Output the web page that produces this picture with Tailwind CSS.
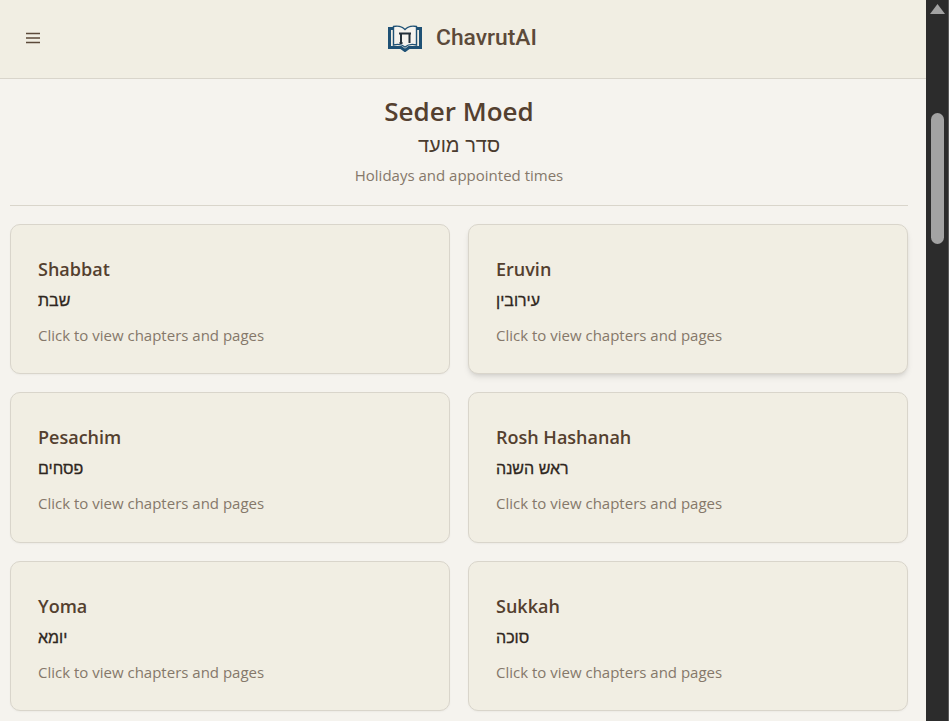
<!DOCTYPE html>
<html lang="en">
<head>
    <meta charset="UTF-8">
    <title>ChavrutAI</title>
    <script src="https://cdn.jsdelivr.net/npm/@tailwindcss/browser@4"></script>
</head>
<body>
<div class="h-screen w-full flex overflow-hidden bg-[#f5f3ee] font-['Open_Sans','Noto_Sans',sans-serif]">
    <div class="flex-1 min-w-0 overflow-hidden">
        <!-- Header -->
        <header class="h-[79px] bg-[#f1eee3] border-b border-[#d9d5cb] relative flex items-center justify-center">
            <button class="absolute left-[26px] top-[32px] text-[#5c4a3a]">
                <svg class="block w-[14px] h-[12px]" viewBox="0 0 14 12" fill="none" stroke="currentColor" stroke-width="1.5">
                    <path d="M0 1.5h14M0 6h14M0 10.5h14" />
                </svg>
            </button>
            <div class="flex items-center gap-[14px] mb-[3px] w-[149px] ml-[-1px]">
                <svg class="w-[34px] h-[28px] shrink-0" viewBox="0 0 34 28" fill="none">
                    <path d="M6 4.5H1.5V23.5H13L17 26.5L21 23.5H32.5V4.5H28" stroke="#1f5175" stroke-width="3" />
                    <path d="M5.5 21V2.5C9 1.5 14 2.5 17 5.5C20 2.5 25 1.5 28.5 2.5V21C25 20 20 20.5 17 23C14 20.5 9 20 5.5 21Z" fill="#f5f3ee" stroke="#1f5175" stroke-width="1.4" />
                    <path d="M11 9.5H23M13 9.5V19M21.5 9.5V19M11.5 19H14.5" stroke="#24303a" stroke-width="2" />
                </svg>
                <span class="font-['Roboto',sans-serif] font-medium text-[22.8px] leading-8 text-[#5c4a3a]">ChavrutAI</span>
            </div>
        </header>

        <!-- Main Content -->
        <main class="px-[10px]">
            <div class="w-[898px]">
                <div class="text-center border-b border-[#d9d5cb] h-[127px] pt-[14px]">
                    <h1 class="text-[26px] leading-[36px] font-[550] text-[#54402f]">Seder Moed</h1>
                    <p class="text-[20px] leading-[28px] mt-[2px] text-[#4a3b2e] font-['Liberation_Sans',sans-serif]" dir="rtl">סדר מועד</p>
                    <p class="text-[15px] leading-[22px] mt-[5px] text-[#85786a]">Holidays and appointed times</p>
                </div>

                <div class="grid grid-cols-2 gap-[18px] mt-[18px]">
                    <div class="h-[150.4px] rounded-[10px] border border-[#d9d5cb] bg-[#f1eee3] shadow-[0_1px_2px_rgba(0,0,0,0.04)] px-[27px] pt-[30px]">
                        <h3 class="text-[18px] leading-[28px] font-[550] text-[#54402f]">Shabbat</h3>
                        <p class="text-[16px] leading-[24px] mt-[6px] text-[#2e2620] text-left font-['Liberation_Sans',sans-serif] [-webkit-text-stroke:0.3px]">שבת</p>
                        <p class="text-[15px] leading-[22px] mt-[11px] text-[#85786a]">Click to view chapters and pages</p>
                    </div>
                    <div class="h-[150.4px] rounded-[10px] border border-[#d9d5cb] bg-[#f1eee3] shadow-md px-[27px] pt-[30px]">
                        <h3 class="text-[18px] leading-[28px] font-[550] text-[#54402f]">Eruvin</h3>
                        <p class="text-[16px] leading-[24px] mt-[6px] text-[#2e2620] text-left font-['Liberation_Sans',sans-serif] [-webkit-text-stroke:0.3px]">עירובין</p>
                        <p class="text-[15px] leading-[22px] mt-[11px] text-[#85786a]">Click to view chapters and pages</p>
                    </div>
                    <div class="h-[150.4px] rounded-[10px] border border-[#d9d5cb] bg-[#f1eee3] shadow-[0_1px_2px_rgba(0,0,0,0.04)] px-[27px] pt-[30px]">
                        <h3 class="text-[18px] leading-[28px] font-[550] text-[#54402f]">Pesachim</h3>
                        <p class="text-[16px] leading-[24px] mt-[6px] text-[#2e2620] text-left font-['Liberation_Sans',sans-serif] [-webkit-text-stroke:0.3px]">פסחים</p>
                        <p class="text-[15px] leading-[22px] mt-[11px] text-[#85786a]">Click to view chapters and pages</p>
                    </div>
                    <div class="h-[150.4px] rounded-[10px] border border-[#d9d5cb] bg-[#f1eee3] shadow-[0_1px_2px_rgba(0,0,0,0.04)] px-[27px] pt-[30px]">
                        <h3 class="text-[18px] leading-[28px] font-[550] text-[#54402f]">Rosh Hashanah</h3>
                        <p class="text-[16px] leading-[24px] mt-[6px] text-[#2e2620] text-left font-['Liberation_Sans',sans-serif] [-webkit-text-stroke:0.3px]">ראש השנה</p>
                        <p class="text-[15px] leading-[22px] mt-[11px] text-[#85786a]">Click to view chapters and pages</p>
                    </div>
                    <div class="h-[150.4px] rounded-[10px] border border-[#d9d5cb] bg-[#f1eee3] shadow-[0_1px_2px_rgba(0,0,0,0.04)] px-[27px] pt-[30px]">
                        <h3 class="text-[18px] leading-[28px] font-[550] text-[#54402f]">Yoma</h3>
                        <p class="text-[16px] leading-[24px] mt-[6px] text-[#2e2620] text-left font-['Liberation_Sans',sans-serif] [-webkit-text-stroke:0.3px]">יומא</p>
                        <p class="text-[15px] leading-[22px] mt-[11px] text-[#85786a]">Click to view chapters and pages</p>
                    </div>
                    <div class="h-[150.4px] rounded-[10px] border border-[#d9d5cb] bg-[#f1eee3] shadow-[0_1px_2px_rgba(0,0,0,0.04)] px-[27px] pt-[30px]">
                        <h3 class="text-[18px] leading-[28px] font-[550] text-[#54402f]">Sukkah</h3>
                        <p class="text-[16px] leading-[24px] mt-[6px] text-[#2e2620] text-left font-['Liberation_Sans',sans-serif] [-webkit-text-stroke:0.3px]">סוכה</p>
                        <p class="text-[15px] leading-[22px] mt-[11px] text-[#85786a]">Click to view chapters and pages</p>
                    </div>
                </div>
            </div>
        </main>
    </div>

    <!-- Scrollbar -->
    <div class="w-[23px] shrink-0 bg-[#2c2c2c] border-r border-[#5a5a5a] relative">
        <svg class="absolute left-[4px] top-[4px] w-[15px] h-[10px]" viewBox="0 0 15 10"><path d="M7.5 0L15 10H0Z" fill="#a3a3a3" /></svg>
        <div class="absolute left-[5px] top-[113px] w-[13px] h-[131px] rounded-full bg-[#a3a3a3]"></div>
    </div>
</div>
</body>
</html>
